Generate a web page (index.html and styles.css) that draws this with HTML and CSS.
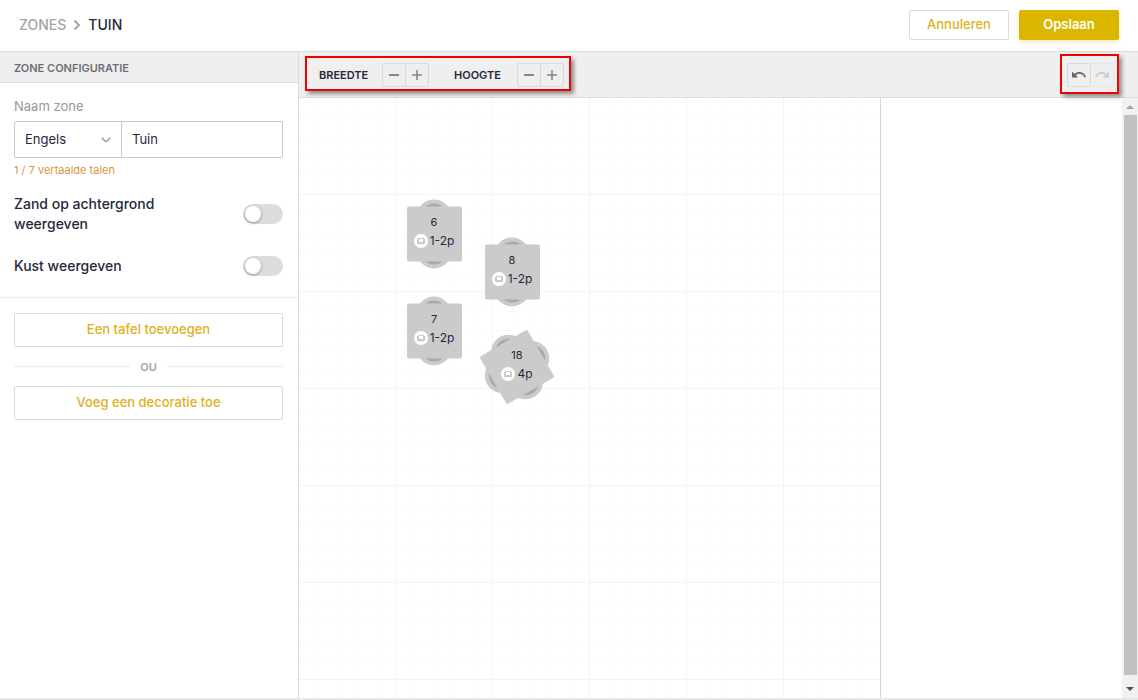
FILE: index.html
```
<!DOCTYPE html>
<html lang="nl">
<head>
  <meta charset="UTF-8">
  <title>Zones - Tuin</title>
  <link rel="stylesheet" href="styles.css">
</head>
<body>
  <header class="topbar">
    <nav class="breadcrumb">
      <a href="#">ZONES</a>
      <svg width="8" height="12" viewBox="0 0 8 12"><path d="M1.5 1.5 6 6 1.5 10.5" fill="none" stroke="#a3a4aa" stroke-width="2"/></svg>
      <span>TUIN</span>
    </nav>
    <div class="actions">
      <button class="btn">Annuleren</button>
      <button class="btn btn-primary">Opslaan</button>
    </div>
  </header>

  <main class="layout">
    <aside class="sidebar">
      <h2>ZONE CONFIGURATIE</h2>

      <section class="config">
        <label class="field-label" for="zoneName">Naam zone</label>
        <div class="name-field">
          <div class="select-wrap">
            <select aria-label="Taal">
              <option>Engels</option>
            </select>
            <svg width="10" height="6" viewBox="0 0 10 6"><path d="M.7.8 4 4Q5 4.900 6 4L9.300.8" fill="none" stroke="#999" stroke-width="1.5"/></svg>
          </div>
          <input type="text" id="zoneName" value="Tuin">
        </div>
        <p class="hint">1 / 7 vertaalde talen</p>

        <div class="toggle-row">
          <label for="sand">Zand op achtergrond weergeven</label>
          <input type="checkbox" id="sand" class="toggle">
        </div>
        <div class="toggle-row">
          <label for="coast">Kust weergeven</label>
          <input type="checkbox" id="coast" class="toggle">
        </div>
      </section>

      <section class="add">
        <button class="btn">Een tafel toevoegen</button>
        <div class="or">OU</div>
        <button class="btn">Voeg een decoratie toe</button>
      </section>
    </aside>

    <section class="editor">
      <div class="toolbar">
        <div class="marked sizes">
          <span>BREEDTE</span>
          <div class="group">
            <button aria-label="Breedte verkleinen"><svg width="12" height="12"><path d="M1 6h10" stroke="#85888a" stroke-width="2"/></svg></button>
            <button aria-label="Breedte vergroten"><svg width="12" height="12"><path d="M1 6h10M6 1v10" stroke="#85888a" stroke-width="1.6"/></svg></button>
          </div>
          <span>HOOGTE</span>
          <div class="group">
            <button aria-label="Hoogte verkleinen"><svg width="12" height="12"><path d="M1 6h10" stroke="#85888a" stroke-width="2"/></svg></button>
            <button aria-label="Hoogte vergroten"><svg width="12" height="12"><path d="M1 6h10M6 1v10" stroke="#85888a" stroke-width="1.6"/></svg></button>
          </div>
        </div>
        <div class="marked history">
          <div class="group">
            <button aria-label="Ongedaan maken"><svg width="14" height="8" viewBox="0 0 14 8"><path d="M0 .5v6h6L3.8 4.3C6.5 2 10.500 2.200 12.500 6.500L14 6C12 .8 6.500-.5 2.500 3z" fill="#60646b"/></svg></button>
            <button aria-label="Opnieuw" disabled><svg width="14" height="8" viewBox="0 0 14 8"><path d="M14 .5v6H8l2.200-2.200C7.500 2 3.500 2.200 1.500 6.500L0 6C2 .8 7.500-.5 11.500 3z" fill="#cbcccd"/></svg></button>
          </div>
        </div>
      </div>

      <div class="canvas">
        <div class="grid">
          <div class="table t6">
            <svg class="shape"><use href="#two"/></svg>
            <b>6</b>
            <span><svg class="badge"><use href="#seat"/></svg>1-2p</span>
          </div>
          <div class="table t8">
            <svg class="shape"><use href="#two"/></svg>
            <b>8</b>
            <span><svg class="badge"><use href="#seat"/></svg>1-2p</span>
          </div>
          <div class="table t7">
            <svg class="shape"><use href="#two"/></svg>
            <b>7</b>
            <span><svg class="badge"><use href="#seat"/></svg>1-2p</span>
          </div>
          <div class="table t18">
            <svg class="shape"><use href="#four"/></svg>
            <b>18</b>
            <span><svg class="badge"><use href="#seat"/></svg>4p</span>
          </div>
        </div>
        <div class="scrollbar">
          <svg width="8" height="4"><path d="M0 4 4 0l4 4z" fill="#a3a3a3"/></svg>
          <div class="thumb"></div>
          <svg width="8" height="4"><path d="M0 0h8L4 4z" fill="#505050"/></svg>
        </div>
      </div>
    </section>
  </main>

  <svg class="defs">
    <defs>
      <g id="chair">
        <circle cx="40" cy="23" r="15.500" fill="#a9a9a9" stroke="#cbcbcb" stroke-width="4"/>
      </g>
      <g id="two">
        <use href="#chair"/>
        <use href="#chair" transform="rotate(180 40 40)"/>
        <rect x="13" y="12.500" width="55" height="55" rx="2" fill="#cbcbcb"/>
      </g>
      <g id="four" transform="rotate(-30 40 40)">
        <use href="#chair"/>
        <use href="#chair" transform="rotate(90 40 40)"/>
        <use href="#chair" transform="rotate(180 40 40)"/>
        <use href="#chair" transform="rotate(270 40 40)"/>
        <rect x="12.500" y="12.500" width="55" height="55" rx="2" fill="#cbcbcb"/>
      </g>
      <g id="seat">
        <circle cx="7" cy="7" r="7" fill="#fff"/>
        <path d="M4.500 4.500h5v4h-5zM3.500 5v4.500h7V5M4.500 4v-.5M9.500 4v-.5M4.500 9.500v1M9.500 9.500v1" fill="none" stroke="#c8c8c8"/>
      </g>
    </defs>
  </svg>
</body>
</html>
```
FILE: styles.css
```
* {
  box-sizing: border-box;
}

body {
  margin: 0;
  height: 100vh;
  display: flex;
  flex-direction: column;
  font-family: Inter, "Liberation Sans", sans-serif;
  font-size: 13px;
  color: #25283a;
  background: #fff;
  border-bottom: 2px solid #e6e6e6;
}

button, input, select {
  font: inherit;
  color: inherit;
  margin: 0;
}

.topbar {
  display: flex;
  justify-content: space-between;
  align-items: center;
  height: 52px;
  padding: 0 19px 2px;
  border-bottom: 1px solid #dcdcdc;
}

.breadcrumb {
  display: flex;
  align-items: center;
  gap: 7px;
  font-size: 14px;
  font-weight: 500;
}

.breadcrumb a {
  color: #a3a4aa;
  text-decoration: none;
}

.actions {
  display: flex;
  gap: 10px;
}

.btn {
  height: 34px;
  padding: 0 0 2px;
  background: #fff;
  border: 1px solid #dadbdd;
  border-radius: 2px;
  color: #dcb21c;
  font-weight: 500;
}

.actions .btn {
  width: 100px;
  height: 30px;
}

.actions .btn-primary {
  background: #dab600;
  border-color: #dab600;
  color: #fff;
  font-weight: 600;
  box-shadow: 0 2px 5px rgba(218, 182, 0, 0.3);
}

.layout {
  flex: 1;
  display: flex;
  min-height: 0;
}

.sidebar {
  width: 299px;
  flex-shrink: 0;
  border-right: 1px solid #dcdcdc;
}

.sidebar h2 {
  margin: 0;
  padding: 1px 14px 0;
  height: 31px;
  font-size: 11px;
  line-height: 30px;
  font-weight: 600;
  color: #6d7078;
  background: #efefef;
  border-bottom: 1px solid #dcdcdc;
}

.config {
  padding: 14px 15px 21px 14px;
  border-bottom: 1px solid #ececec;
}

.field-label {
  display: block;
  line-height: 19px;
  margin-bottom: 5px;
  color: #999;
}

.name-field {
  display: flex;
  height: 37px;
  border: 1px solid #c8c9cb;
  border-radius: 2px;
}

.select-wrap {
  width: 107px;
  display: flex;
  align-items: center;
  padding-right: 10px;
  border-right: 1px solid #c8c9cb;
}

.select-wrap select {
  flex: 1;
  appearance: none;
  padding: 0 0 1px 10px;
  border: 0;
  background: none;
}

.name-field input {
  flex: 1;
  min-width: 0;
  padding: 0 10px 1px;
  border: 0;
  background: none;
}

.hint {
  margin: 4px 0 16px;
  font-size: 11px;
  line-height: 16px;
  color: #dc9540;
}

.toggle-row {
  display: flex;
  justify-content: space-between;
  align-items: center;
  font-size: 14px;
  line-height: 20px;
  font-weight: 500;
}

.toggle-row + .toggle-row {
  margin-top: 22px;
}

.toggle-row label {
  width: 170px;
}

.toggle {
  appearance: none;
  width: 40px;
  height: 20px;
  padding: 2px;
  border-radius: 10px;
  background: #dcdcde;
}

.toggle::before {
  content: "";
  display: block;
  width: 16px;
  height: 16px;
  border-radius: 50%;
  background: #fff;
  box-shadow: 0 1px 3px rgba(0, 0, 0, 0.35);
}

.toggle:checked {
  background: #dab600;
}

.toggle:checked::before {
  margin-left: 20px;
}

.add {
  display: flex;
  flex-direction: column;
  padding: 15px 15px 15px 14px;
}

.or {
  display: flex;
  align-items: center;
  gap: 10px;
  height: 39px;
  font-size: 11px;
  font-weight: 600;
  color: #a3a4aa;
}

.or::before, .or::after {
  content: "";
  flex: 1;
  height: 1px;
  background: #ececec;
}

.editor {
  flex: 1;
  display: flex;
  flex-direction: column;
  min-width: 0;
}

.toolbar {
  display: flex;
  justify-content: space-between;
  align-items: flex-start;
  height: 46px;
  padding: 2px 19px 0 6px;
  background: #efefef;
  border-bottom: 1px solid #dcdcdc;
}

/* red highlight around a group of controls */
.marked {
  display: flex;
  align-items: center;
  border: 2px solid #f00000;
  box-shadow: 3px 3px 4px rgba(0, 0, 0, 0.4);
}

.sizes {
  height: 35px;
  margin-top: 2px;
  padding: 2px 5px 0 12px;
  font-size: 11px;
  font-weight: 600;
}

.sizes span {
  width: 63px;
}

.sizes .group + span {
  margin-left: 25px;
}

.history {
  height: 40px;
  padding: 2px 3px 0 5px;
}

.group {
  display: flex;
}

.group button {
  width: 24px;
  height: 24px;
  padding: 0;
  display: flex;
  align-items: center;
  justify-content: center;
  background: none;
  border: 1px solid #dadada;
  border-radius: 2px;
}

.group button + button {
  margin-left: -1px;
}

.group button:disabled {
  border-color: #e8e8e8;
  border-left-color: #dadada;
}

.canvas {
  flex: 1;
  display: flex;
  justify-content: space-between;
  min-height: 0;
}

.grid {
  position: relative;
  width: 582px;
  border-right: 1px solid #d8d8d8;
  background:
    linear-gradient(90deg, transparent 96px, #f4f4f4 96px) 0 0 / 97px 97px,
    linear-gradient(transparent 96px, #f4f4f4 96px) 0 0 / 97px 97px,
    linear-gradient(90deg, transparent 19px, #fbfbfb 19px 20px, transparent 20px 38px, #fbfbfb 38px 39px, transparent 39px 58px, #fbfbfb 58px 59px, transparent 59px 77px, #fbfbfb 77px 78px, transparent 78px) 0 0 / 97px 97px,
    linear-gradient(transparent 19px, #fbfbfb 19px 20px, transparent 20px 38px, #fbfbfb 38px 39px, transparent 39px 58px, #fbfbfb 58px 59px, transparent 59px 77px, #fbfbfb 77px 78px, transparent 78px) 0 0 / 97px 97px;
}

.table {
  position: absolute;
  width: 80px;
  height: 80px;
  display: flex;
  flex-direction: column;
  align-items: center;
  gap: 1px;
  padding-top: 19px;
  line-height: 18px;
  font-size: 12px;
}

.table b {
  position: relative;
  font-size: 11px;
  font-weight: 400;
}

.table span {
  position: relative;
  display: flex;
  align-items: center;
  gap: 2px;
}

.shape {
  position: absolute;
  top: 0;
  left: 0;
  width: 80px;
  height: 80px;
}

.badge {
  width: 14px;
  height: 14px;
}

.t6 {
  left: 95px;
  top: 96px;
}

.t8 {
  left: 173px;
  top: 134px;
}

.t7 {
  left: 95px;
  top: 193px;
}

.t18 {
  left: 178px;
  top: 229px;
}

.scrollbar {
  width: 16px;
  display: flex;
  flex-direction: column;
  align-items: center;
  gap: 6px;
  padding: 7px 0;
  background: #f1f1f1;
}

.thumb {
  flex: 1;
  width: 13px;
  background: #c1c1c1;
  margin-bottom: 6px;
}

.defs {
  position: absolute;
  width: 0;
  height: 0;
}
```
